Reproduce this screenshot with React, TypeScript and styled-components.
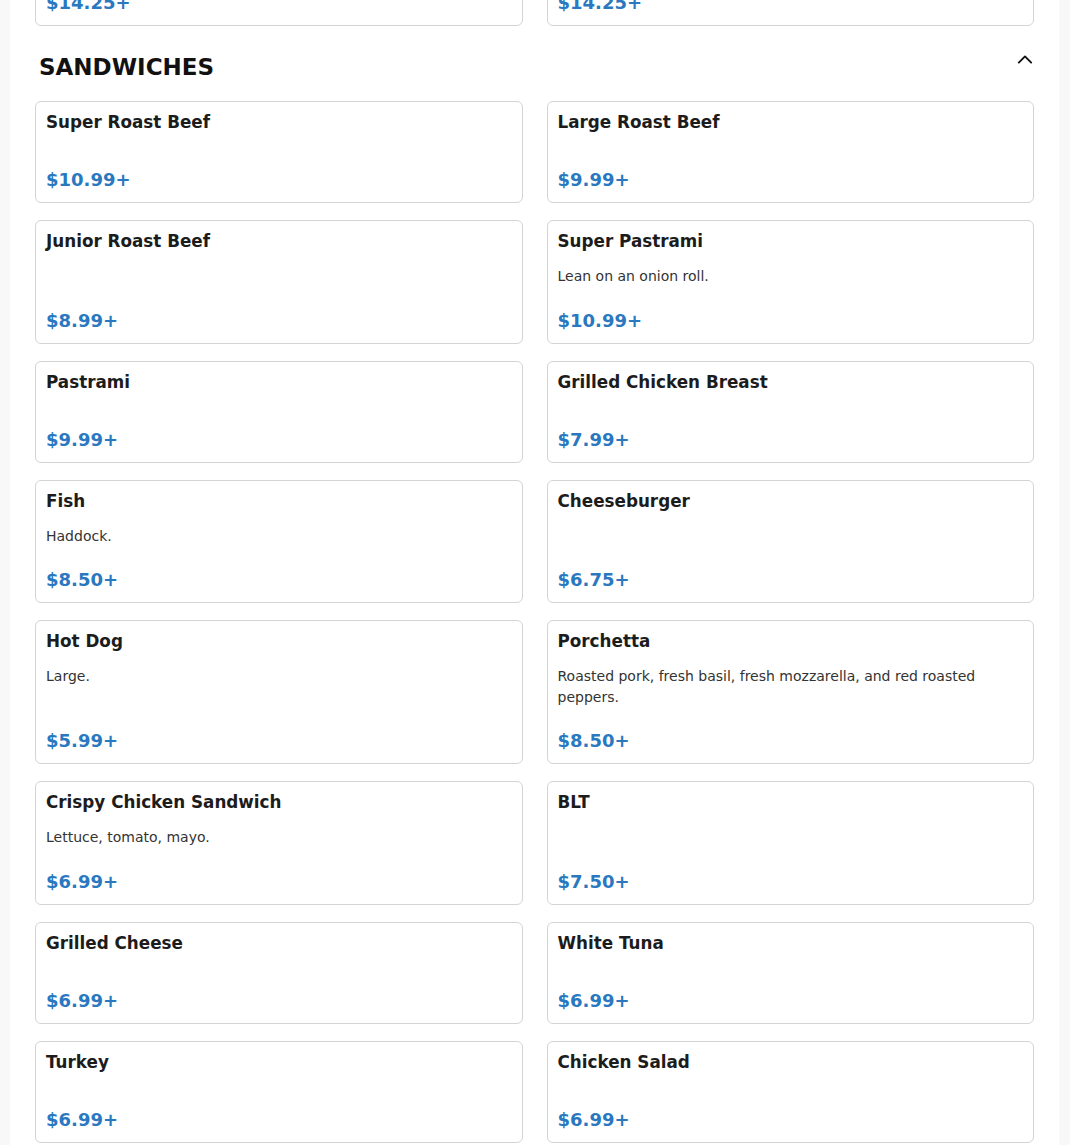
import React from "react";
import styled, { createGlobalStyle } from "styled-components";

const GlobalStyle = createGlobalStyle`
  html, body {
    margin: 0;
    padding: 0;
    background: #f8f8f8;
    font-family: "DejaVu Sans", "Liberation Sans", sans-serif;
    overflow: hidden;
  }
  * { box-sizing: border-box; }
`;

const Container = styled.div`
  margin-left: 10px;
  width: 1049px;
  min-height: 1145px;
  background: #ffffff;
  padding: 0 25px 40px;
`;

const Section = styled.section<{ $offset?: number }>`
  margin-top: ${(p) => (p.$offset ? `${p.$offset}px` : "0")};
`;

const HeaderRow = styled.div`
  display: flex;
  justify-content: space-between;
  align-items: flex-start;
  margin: 27px 0 20px;
  padding: 0 1px 0 4px;
`;

const SectionTitle = styled.h2`
  margin: 0;
  font-size: 23px;
  line-height: 28px;
  font-weight: 700;
  color: #111111;
  letter-spacing: 0;
`;

const ToggleButton = styled.button`
  border: none;
  background: transparent;
  padding: 0;
  margin-top: -1px;
  width: 16px;
  height: 16px;
  display: flex;
  cursor: pointer;
`;

const Grid = styled.div`
  display: grid;
  grid-template-columns: 1fr 1fr;
  column-gap: 24px;
  row-gap: 17px;
`;

const Card = styled.div`
  display: flex;
  flex-direction: column;
  border: 1px solid #d4d4d4;
  border-radius: 6px;
  padding: 10px;
  background: #ffffff;
`;

const ItemName = styled.div`
  font-size: 16.8px;
  line-height: 20px;
  font-weight: 700;
  color: #1c1c1c;
  margin-bottom: 15px;
`;

const ItemDesc = styled.div`
  font-size: 14px;
  line-height: 20.5px;
  color: #333333;
  margin-bottom: 1px;
`;

const Price = styled.div`
  margin-top: auto;
  padding-top: 21px;
  font-size: 18px;
  line-height: 24px;
  font-weight: 700;
  color: #2a78c0;
`;

type Item = { name: string; desc?: string; price: string };

const sandwiches: Item[] = [
  { name: "Super Roast Beef", price: "$10.99+" },
  { name: "Large Roast Beef", price: "$9.99+" },
  { name: "Junior Roast Beef", price: "$8.99+" },
  { name: "Super Pastrami", desc: "Lean on an onion roll.", price: "$10.99+" },
  { name: "Pastrami", price: "$9.99+" },
  { name: "Grilled Chicken Breast", price: "$7.99+" },
  { name: "Fish", desc: "Haddock.", price: "$8.50+" },
  { name: "Cheeseburger", price: "$6.75+" },
  { name: "Hot Dog", desc: "Large.", price: "$5.99+" },
  {
    name: "Porchetta",
    desc: "Roasted pork, fresh basil, fresh mozzarella, and red roasted peppers.",
    price: "$8.50+",
  },
  { name: "Crispy Chicken Sandwich", desc: "Lettuce, tomato, mayo.", price: "$6.99+" },
  { name: "BLT", price: "$7.50+" },
  { name: "Grilled Cheese", price: "$6.99+" },
  { name: "White Tuna", price: "$6.99+" },
  { name: "Turkey", price: "$6.99+" },
  { name: "Chicken Salad", price: "$6.99+" },
];

const previous: Item[] = [
  { name: "Steak Bomb", price: "$14.25+" },
  { name: "Chicken Bomb", price: "$14.25+" },
];

const ChevronUp = () => (
  <svg width="16" height="16" viewBox="0 0 16 16" fill="none">
    <polyline
      points="1.8,10.6 8,4.4 14.2,10.6"
      stroke="#111111"
      strokeWidth="1.9"
      strokeLinecap="round"
      strokeLinejoin="round"
    />
  </svg>
);

const MenuCard = ({ item }: { item: Item }) => (
  <Card>
    <ItemName>{item.name}</ItemName>
    {item.desc && <ItemDesc>{item.desc}</ItemDesc>}
    <Price>{item.price}</Price>
  </Card>
);

export default function App() {
  return (
    <>
      <GlobalStyle />
      <Container>
        <Section $offset={-76}>
          <Grid>
            {previous.map((it) => (
              <MenuCard key={it.name} item={it} />
            ))}
          </Grid>
        </Section>
        <Section>
          <HeaderRow>
            <SectionTitle>SANDWICHES</SectionTitle>
            <ToggleButton aria-label="Collapse section">
              <ChevronUp />
            </ToggleButton>
          </HeaderRow>
          <Grid>
            {sandwiches.map((it) => (
              <MenuCard key={it.name} item={it} />
            ))}
          </Grid>
        </Section>
      </Container>
    </>
  );
}
